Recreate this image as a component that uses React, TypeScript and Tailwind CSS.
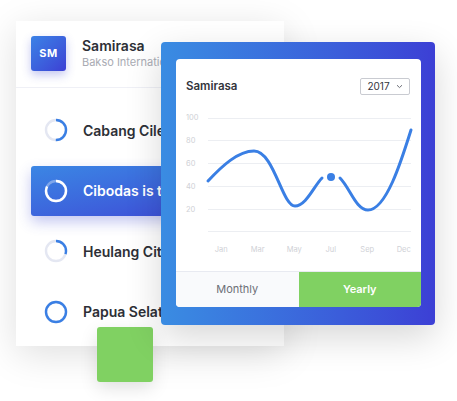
import React from "react"

const font = { fontFamily: "Inter, 'Open Sans', sans-serif" }

type Branch = { name: string; progress: number; active?: boolean }

const branches: Branch[] = [
  { name: "Cabang Cileunyi", progress: 0.5 },
  { name: "Cibodas is the best", progress: 0.82, active: true },
  { name: "Heulang Citra", progress: 0.3 },
  { name: "Papua Selatan", progress: 1 },
]

function Ring({ progress, active }: { progress: number; active?: boolean }) {
  const c = 2 * Math.PI * 10
  return (
    <svg width="24" height="24" viewBox="0 0 24 24" className="shrink-0">
      <circle cx="12" cy="12" r="10" fill="none" stroke={active ? "rgba(255,255,255,0.35)" : "#e4e7f2"} strokeWidth="2.4" />
      <circle
        cx="12"
        cy="12"
        r="10"
        fill="none"
        stroke={active ? "#ffffff" : "#3a7fe4"}
        strokeWidth="2.4"
        strokeDasharray={`${c * progress} ${c}`}
        transform="rotate(-90 12 12)"
      />
    </svg>
  )
}

const yLabels = ["100", "80", "60", "40", "20", ""]
const months = ["Jan", "Mar", "May", "Jul", "Sep", "Dec"]

export default function App() {
  return (
    <div className="relative w-[457px] h-[401px] overflow-hidden bg-white" style={font}>
      {/* Branch list card */}
      <div className="ml-[16px] mt-[21px] w-[268px] h-[325px] bg-white shadow-[0_8px_36px_rgba(0,0,0,0.13)] flex flex-col">
        <div className="flex items-center gap-[16px] px-[15px] pt-[15px] pb-[16px] border-b border-[#eff0f6]">
          <div className="w-[35px] h-[35px] rounded-[3px] bg-gradient-to-br from-[#3b82e6] to-[#3d3fd4] flex items-center justify-center text-white text-[11px] font-bold tracking-[0.5px] shadow-[0_4px_10px_rgba(61,70,210,0.3)]">
            SM
          </div>
          <div className="flex flex-col w-[79px] overflow-hidden">
            <span className="text-[14px] font-semibold text-[#2d2f36] leading-[18px]">Samirasa</span>
            <span className="text-[11px] text-[#a9abb3] leading-[15px] whitespace-nowrap">Bakso International</span>
          </div>
        </div>
        <div className="flex flex-col gap-[10.5px] px-[15px] pt-[17px]">
          {branches.map((b) => (
            <div
              key={b.name}
              className={`h-[50px] flex items-center gap-[15px] pl-[13px] rounded-[3px] ${
                b.active
                  ? "bg-gradient-to-br from-[#3b86e4] to-[#3e40d4] shadow-[0_6px_14px_rgba(61,70,210,0.3)]"
                  : ""
              }`}
            >
              <Ring progress={b.progress} active={b.active} />
              <span
                className={`w-[79px] overflow-hidden text-[14px] font-semibold whitespace-nowrap ${
                  b.active ? "text-white" : "text-[#2d2f36]"
                }`}
              >
                {b.name}
              </span>
            </div>
          ))}
        </div>
      </div>

      {/* Green square */}
      <div className="absolute left-[97px] top-[327px] w-[56px] h-[55px] rounded-[3px] bg-[#80d162] shadow-[0_6px_18px_rgba(0,0,0,0.12)]" />

      {/* Chart card */}
      <div className="absolute left-[161px] top-[42px] w-[274px] h-[283px] rounded-[4px] bg-gradient-to-r from-[#3a8ce2] to-[#3c3fd5] pl-[15px] pr-[14px] pt-[17px] shadow-[0_12px_36px_rgba(0,0,0,0.16)]">
        <div className="w-[245px] h-[248px] bg-white rounded-[4px] overflow-hidden flex flex-col">
          <div className="flex items-center justify-between pl-[10px] pr-[11px] pt-[19px] h-[36px]">
            <span className="text-[11.5px] font-semibold text-[#33353c]">Samirasa</span>
            <div className="w-[50px] h-[17px] border border-[#c9cbd1] rounded-[2px] flex items-center justify-center gap-[6px]">
              <span className="text-[10px] text-[#33353c]">2017</span>
              <svg width="7" height="5" viewBox="0 0 7 5">
                <path d="M1 1.2 L3.5 3.6 L6 1.2" fill="none" stroke="#6b6e76" strokeWidth="1" />
              </svg>
            </div>
          </div>

          <div className="relative mt-[23px] h-[114px] flex flex-col justify-between">
            {yLabels.map((l, i) => (
              <div key={i} className="h-0 flex items-center pl-[10px]">
                <span className="w-[22px] text-[7.5px] text-[#cfd1d6]">{l}</span>
                <div className="w-[203px] border-t border-[#eceef2]" />
              </div>
            ))}
            <svg
              className="absolute left-[32px] top-0 overflow-visible"
              width="203"
              height="114"
              viewBox="208 118 203 114"
            >
              <path
                d="M208 181 C222 166 238 151 254 151 C274 151 282 206 295 206 C306 206 314 186 322 178"
                fill="none"
                stroke="#3a7fe4"
                strokeWidth="3"
                strokeLinecap="round"
              />
              <path
                d="M340 178 C350 188 356 210 368 210 C386 210 401 162 411 130"
                fill="none"
                stroke="#3a7fe4"
                strokeWidth="3"
                strokeLinecap="round"
              />
              <circle cx="331" cy="177" r="4" fill="#3a7fe4" />
            </svg>
          </div>

          <div className="ml-[27px] w-[219px] grid grid-cols-6 mt-[14px]">
            {months.map((m) => (
              <span key={m} className="text-center text-[7.5px] text-[#cfd1d6] leading-[8px]">
                {m}
              </span>
            ))}
          </div>

          <div className="mt-auto h-[36px] flex border-t border-[#e8eaf1]">
            <div className="flex-1 bg-[#f9fafc] flex items-center justify-center text-[11px] text-[#6d6f77]">
              Monthly
            </div>
            <div className="flex-1 bg-[#80d162] flex items-center justify-center text-[11px] font-semibold text-white">
              Yearly
            </div>
          </div>
        </div>
      </div>
    </div>
  )
}
